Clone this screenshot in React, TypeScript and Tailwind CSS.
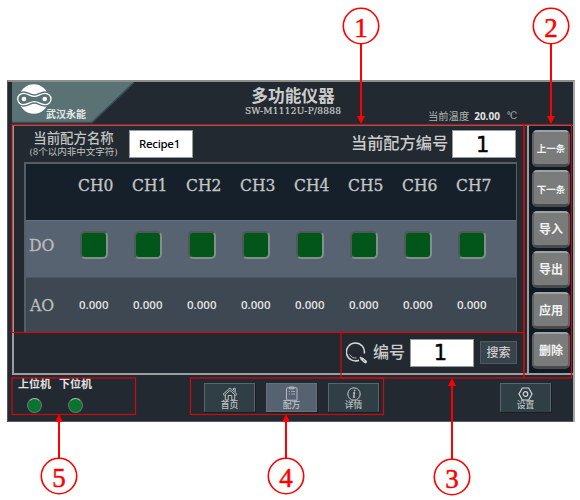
import { useState } from 'react';
import clsx from 'clsx';

const channels = ['CH0', 'CH1', 'CH2', 'CH3', 'CH4', 'CH5', 'CH6', 'CH7'];

const sideActions = [
  { key: 'prev', label: '上一条', size: 'text-[9.5px]' },
  { key: 'next', label: '下一条', size: 'text-[9.5px]' },
  { key: 'import', label: '导入', size: 'text-[12px]' },
  { key: 'export', label: '导出', size: 'text-[12px]' },
  { key: 'apply', label: '应用', size: 'text-[12px]' },
  { key: 'delete', label: '删除', size: 'text-[12px]' },
];

// Callouts: circle centre, and the line from the circle to the arrow tip
const callouts = [
  { n: '1', cx: 361, cy: 26, from: 44, tip: 124 },
  { n: '2', cx: 551, cy: 26, from: 44, tip: 124 },
  { n: '3', cx: 452, cy: 477, from: 459, tip: 378 },
  { n: '4', cx: 286, cy: 476, from: 458, tip: 414 },
  { n: '5', cx: 59, cy: 476, from: 458, tip: 414 },
];

const frames = [
  { x: 12, y: 124.5, w: 512, h: 208 },
  { x: 524, y: 124.5, w: 47.5, h: 253.5 },
  { x: 341, y: 332.5, w: 183, h: 45.5 },
  { x: 190.5, y: 378, w: 193, h: 36.5 },
  { x: 12, y: 378, w: 123.5, h: 36.5 },
];

const linkPath =
  'M23.5 93.3C28 93.3 30 96.3 34.3 96.3C38.6 96.3 40.6 93.3 45 93.3C48.5 93.3 51 96 51 99C51 102 48.5 104.7 45 104.7C40.6 104.7 38.6 101.7 34.3 101.7C30 101.7 28 104.7 23.5 104.7C20 104.7 17.7 102 17.7 99C17.7 96 20 93.3 23.5 93.3Z';

function Logo() {
  return (
    <svg width="125" height="42" viewBox="0 0 125 42" className="shrink-0">
      <path d="M0 0H122L80 40H0Z" fill="#5a7274" />
      <path d="M0 40.5H80L122 0.5" fill="none" stroke="#365055" strokeWidth="1.5" />
      <g transform="translate(-12 -82)">
        <circle cx="33.8" cy="99" r="14.8" fill="#fff" />
        <path d={linkPath} fill="#5a7274" stroke="#5a7274" strokeWidth="4" />
        <path d={linkPath} fill="none" stroke="#fff" strokeWidth="1.3" />
        <circle cx="24" cy="99" r="2.3" fill="#fff" />
        <circle cx="44.7" cy="99" r="2.3" fill="#fff" />
      </g>
    </svg>
  );
}

function HomeIcon() {
  return (
    <svg width="16" height="14" viewBox="0 0 16 14" fill="none" stroke="#b9c0c1" strokeWidth="1">
      <path d="M1 7.3L8 1L15 7.3L13.7 8.4L8 3.3L2.3 8.4Z" />
      <path d="M11.5 3V1.3H13.2V5M3.3 8V13H6.2V8.5H9.8V13H12.7V8" />
    </svg>
  );
}

function RecipeIcon() {
  return (
    <svg width="14" height="15" viewBox="0 0 14 15" fill="none" stroke="#b4bbc1" strokeWidth="1">
      <rect x="1.5" y="1.8" width="10.5" height="12.4" rx="0.6" />
      <path d="M4.5 2.8V1H9V2.8Z" />
      <path d="M3.7 5.5H5M6.2 5.5H10M3.7 8H5M6.2 8H10" strokeWidth="0.8" />
    </svg>
  );
}

function InfoIcon() {
  return (
    <svg width="14" height="14" viewBox="0 0 14 14" fill="none" stroke="#c6cbcc" strokeWidth="1">
      <circle cx="7" cy="7" r="6.2" />
      <path d="M6 5.8H7.5L6.6 10.2H8" strokeWidth="1.2" />
      <circle cx="7.6" cy="3.6" r="0.5" fill="#c6cbcc" />
    </svg>
  );
}

function SettingsIcon() {
  return (
    <svg width="15" height="14" viewBox="0 0 15 14" fill="none" stroke="#d2d6d7" strokeWidth="1.2">
      <path d="M4.3 1H10.7L14 7L10.7 13H4.3L1 7Z" />
      <circle cx="7.5" cy="7" r="2.3" />
    </svg>
  );
}

function SearchIcon() {
  return (
    <svg width="22" height="23" viewBox="0 0 22 23" fill="none" stroke="#d5d8d9" className="shrink-0">
      <path d="M13 19.2A9 9 0 1 1 18.3 12.5" strokeWidth="1.5" />
      <path d="M3.6 13.3A7 7 0 0 0 10.5 17" strokeWidth="0.8" />
      <path d="M14 16.2L16 18" strokeWidth="1.6" />
      <path d="M16.1 18.1L19.4 20.7" strokeWidth="3.2" strokeLinecap="round" />
      <path d="M17.3 19L18.6 20.1" stroke="#222930" strokeWidth="0.8" />
    </svg>
  );
}

const navItems = [
  { key: 'home', label: '首页', icon: HomeIcon },
  { key: 'recipe', label: '配方', icon: RecipeIcon },
  { key: 'info', label: '详情', icon: InfoIcon },
];

interface NavButtonProps {
  label: string;
  icon: () => React.ReactElement;
  active?: boolean;
  onClick?: () => void;
}

function NavButton({ label, icon: Icon, active, onClick }: NavButtonProps) {
  return (
    <button
      onClick={onClick}
      className={clsx(
        'flex h-[29px] w-[51px] flex-col items-center border pt-[2px] shadow-[1px_1px_0_#181e23]',
        active ? 'border-[#67727d] bg-[#566270]' : 'border-[#56666b] border-b-[#303e45] bg-[#303e46]',
      )}
    >
      <span className="flex h-[15px] items-center"><Icon /></span>
      <span className="text-[8.8px] font-medium leading-[9px] text-[#bdc2c2]">{label}</span>
    </button>
  );
}

function Led({ label }: { label: string }) {
  return (
    <div className="flex w-[33px] flex-col items-center">
      <span className="whitespace-nowrap text-[11px] font-bold leading-[14px] text-[#e2e2e0]">{label}</span>
      <span className="mt-[6px] size-[15px] rounded-full border-[1.5px] border-[#68736f] border-t-[#aeb9b3] bg-[#08742f]" />
    </div>
  );
}

function NumberField({ value }: { value: number }) {
  return (
    <div className="flex h-[28px] w-[64px] shrink-0 items-center justify-center border border-[#9a9c9c] bg-white pt-[2px] pr-[3px] font-['DejaVu_Sans',sans-serif] text-[21px] leading-none text-black [-webkit-text-stroke:0.4px_black]">
      {value}
    </div>
  );
}

function Annotations() {
  return (
    <svg width="580" height="500" viewBox="0 0 580 500" className="pointer-events-none absolute left-0 top-0">
      {frames.map((f, i) => (
        <rect key={i} x={f.x} y={f.y} width={f.w} height={f.h} fill="none" stroke="#cf0a0c" strokeWidth="1.2" />
      ))}
      {callouts.map(({ n, cx, cy, from, tip }) => {
        const base = tip > from ? tip - 8 : tip + 8;
        return (
          <g key={n}>
            <path d={`M${cx} ${from}V${base}`} stroke="#fe0000" strokeWidth="2" />
            <path d={`M${cx - 4} ${base}H${cx + 4}L${cx} ${tip}Z`} fill="#fe0000" />
            <circle cx={cx} cy={cy} r="17.7" fill="#fff" stroke="#fe0000" strokeWidth="1.6" />
            <text
              x={cx}
              y={cy + 11}
              textAnchor="middle"
              fill="#fe0000"
              stroke="#fe0000"
              strokeWidth="0.5"
              fontSize="27"
              fontFamily="Liberation Serif, serif"
            >
              {n}
            </text>
          </g>
        );
      })}
    </svg>
  );
}

export default function App() {
  const [page, setPage] = useState('recipe');

  return (
    <div className="relative h-[500px] w-[580px] overflow-hidden bg-white px-[7px] pt-[80px] font-['DejaVu_Serif_Condensed','DejaVu_Serif','Noto_Sans_CJK_SC',serif]">
      <div className="flex h-[342px] w-[568px] flex-col border-l border-r-2 border-t-2 border-l-[#4d565b] border-r-[#a3a7a8] border-t-[#8b8f8f] bg-[#222930]">
        {/* Header */}
        <div className="grid h-[43px] shrink-0 grid-cols-[200px_170px_1fr] pl-[4px]">
          <div className="relative">
            <Logo />
            <span className="absolute left-[34px] top-[26px] text-[10px] font-bold leading-[14px] text-[#e5eaea]">武汉永能</span>
          </div>
          <div className="flex flex-col items-center pr-[8px] pt-[4px] text-[#cbcccb]">
            <h1 className="text-[16.7px] font-bold leading-[20px]">多功能仪器</h1>
            <p className="-mt-px whitespace-nowrap text-[10px] leading-[12px] tracking-[0.25px] [-webkit-text-stroke:0.2px_#cbcccb]">SW-M1112U-P/8888</p>
          </div>
          <div className="flex items-end pb-px pl-[46px] text-[10.3px] leading-[16px] text-[#aeb2b2]">
            <span>当前温度</span>
            <span className="ml-[5px] font-['Open_Sans',sans-serif] text-[10px] font-bold text-[#e4e5e5]">20.00</span>
            <span className="ml-[7px] text-[10px]">℃</span>
          </div>
        </div>

        {/* Main area */}
        <div className="flex h-[250px] shrink-0 pl-[4px]">
          <div className="flex w-[517px] flex-col border-2 border-t-[1.5px] border-[#9c9d9d] border-t-[#5d7777] pl-[10px]">
            <div className="flex h-[36px] shrink-0 items-center">
              <div className="w-[99px] text-center text-[#c3c5c4]">
                <div className="text-[13.4px] font-medium leading-[15px]">当前配方名称</div>
                <div className="whitespace-nowrap text-[9.5px] leading-[11px]">(8个以内非中文字符)</div>
              </div>
              <div className="ml-[6px] flex h-[28px] w-[64px] items-center justify-center border border-[#9a9c9c] bg-white pr-[3px] font-['Noto_Sans',sans-serif] text-[11.5px] font-medium tracking-[-0.3px] text-black">
                Recipe1
              </div>
              <span className="ml-[158px] mr-[4px] text-[16.2px] font-medium leading-[20px] text-[#cbcccb]">当前配方编号</span>
              <NumberField value={1} />
            </div>

            <div className="flex h-[171px] w-[493px] shrink-0 flex-col border border-l-2 border-t-2 border-[#555e65] bg-[#3e4852]">
              <div className="flex h-[56px] items-center bg-[#16202b] pb-[14px] pl-[52px]">
                {channels.map(ch => (
                  <span key={ch} className="w-[54px] text-[17.3px] leading-[20px] text-[#c5c6c4] [-webkit-text-stroke:0.3px_#c5c6c4]">{ch}</span>
                ))}
              </div>
              <div className="flex h-[57px] items-center border-t border-[#657079] bg-[#576370] pb-[9px]">
                <span className="w-[54px] pl-[3px] pt-[2px] text-[17.5px] text-[#bbbdbc] [-webkit-text-stroke:0.3px_#bbbdbc]">DO</span>
                {channels.map(ch => (
                  <span key={ch} className="w-[54px]">
                    <span className="block size-[28px] rounded-[5px] border-2 border-[#4c5b58] border-b-[#81908a] border-r-[#81908a] bg-[#025619]" />
                  </span>
                ))}
              </div>
              <div className="flex h-[55px] items-center border-t border-[#495661] pl-[4px]">
                <span className="w-[49px] text-[17.5px] text-[#bbbdbc] [-webkit-text-stroke:0.3px_#bbbdbc]">AO</span>
                {channels.map(ch => (
                  <span key={ch} className="w-[54px] font-['Open_Sans',sans-serif] text-[11.5px] font-semibold text-[#e2e3e4]">0.000</span>
                ))}
              </div>
            </div>

            {/* Recipe search */}
            <div className="flex h-[39px] items-center gap-[5px] pl-[322px]">
              <SearchIcon />
              <span className="whitespace-nowrap text-[16px] font-medium leading-[20px] text-[#cbcccb]">编号</span>
              <NumberField value={1} />
              <button className="ml-px h-[23px] w-[37px] shrink-0 border border-[#4f5960] bg-[#38434c] text-[12px] font-medium leading-[20px] text-[#cbcdce]">搜索</button>
            </div>
          </div>

          {/* Side actions */}
          <div className="flex w-[44px] flex-col items-center gap-[3.4px] border-b-2 border-t-[1.5px] border-b-[#9c9d9d] border-t-[#5d7777] bg-[#101a25] pt-[4px]">
            {sideActions.map(({ key, label, size }) => (
              <button
                key={key}
                className={clsx(
                  'h-[37px] w-[38px] shrink-0 rounded-[5px] border-2 border-b-[3px] border-[#606161] border-b-[#484a4b] border-t-[#a0a1a1] bg-[#7a7b7b] pt-[2px] font-bold leading-none text-[#f2f2f2]',
                  size,
                )}
              >
                {label}
              </button>
            ))}
          </div>
        </div>

        {/* Footer */}
        <div className="flex flex-1 border-b border-[#555d62] pl-[10px] pt-[3px]">
          <div className="flex w-[186px] gap-[8px]">
            <Led label="上位机" />
            <Led label="下位机" />
          </div>
          <div className="flex gap-[11px] pt-[5px]">
            {navItems.map(({ key, label, icon }) => (
              <NavButton key={key} label={label} icon={icon} active={page === key} onClick={() => setPage(key)} />
            ))}
          </div>
          <div className="ml-auto pr-[22px] pt-[5px]">
            <NavButton label="设置" icon={SettingsIcon} />
          </div>
        </div>
      </div>

      <Annotations />
    </div>
  );
}
